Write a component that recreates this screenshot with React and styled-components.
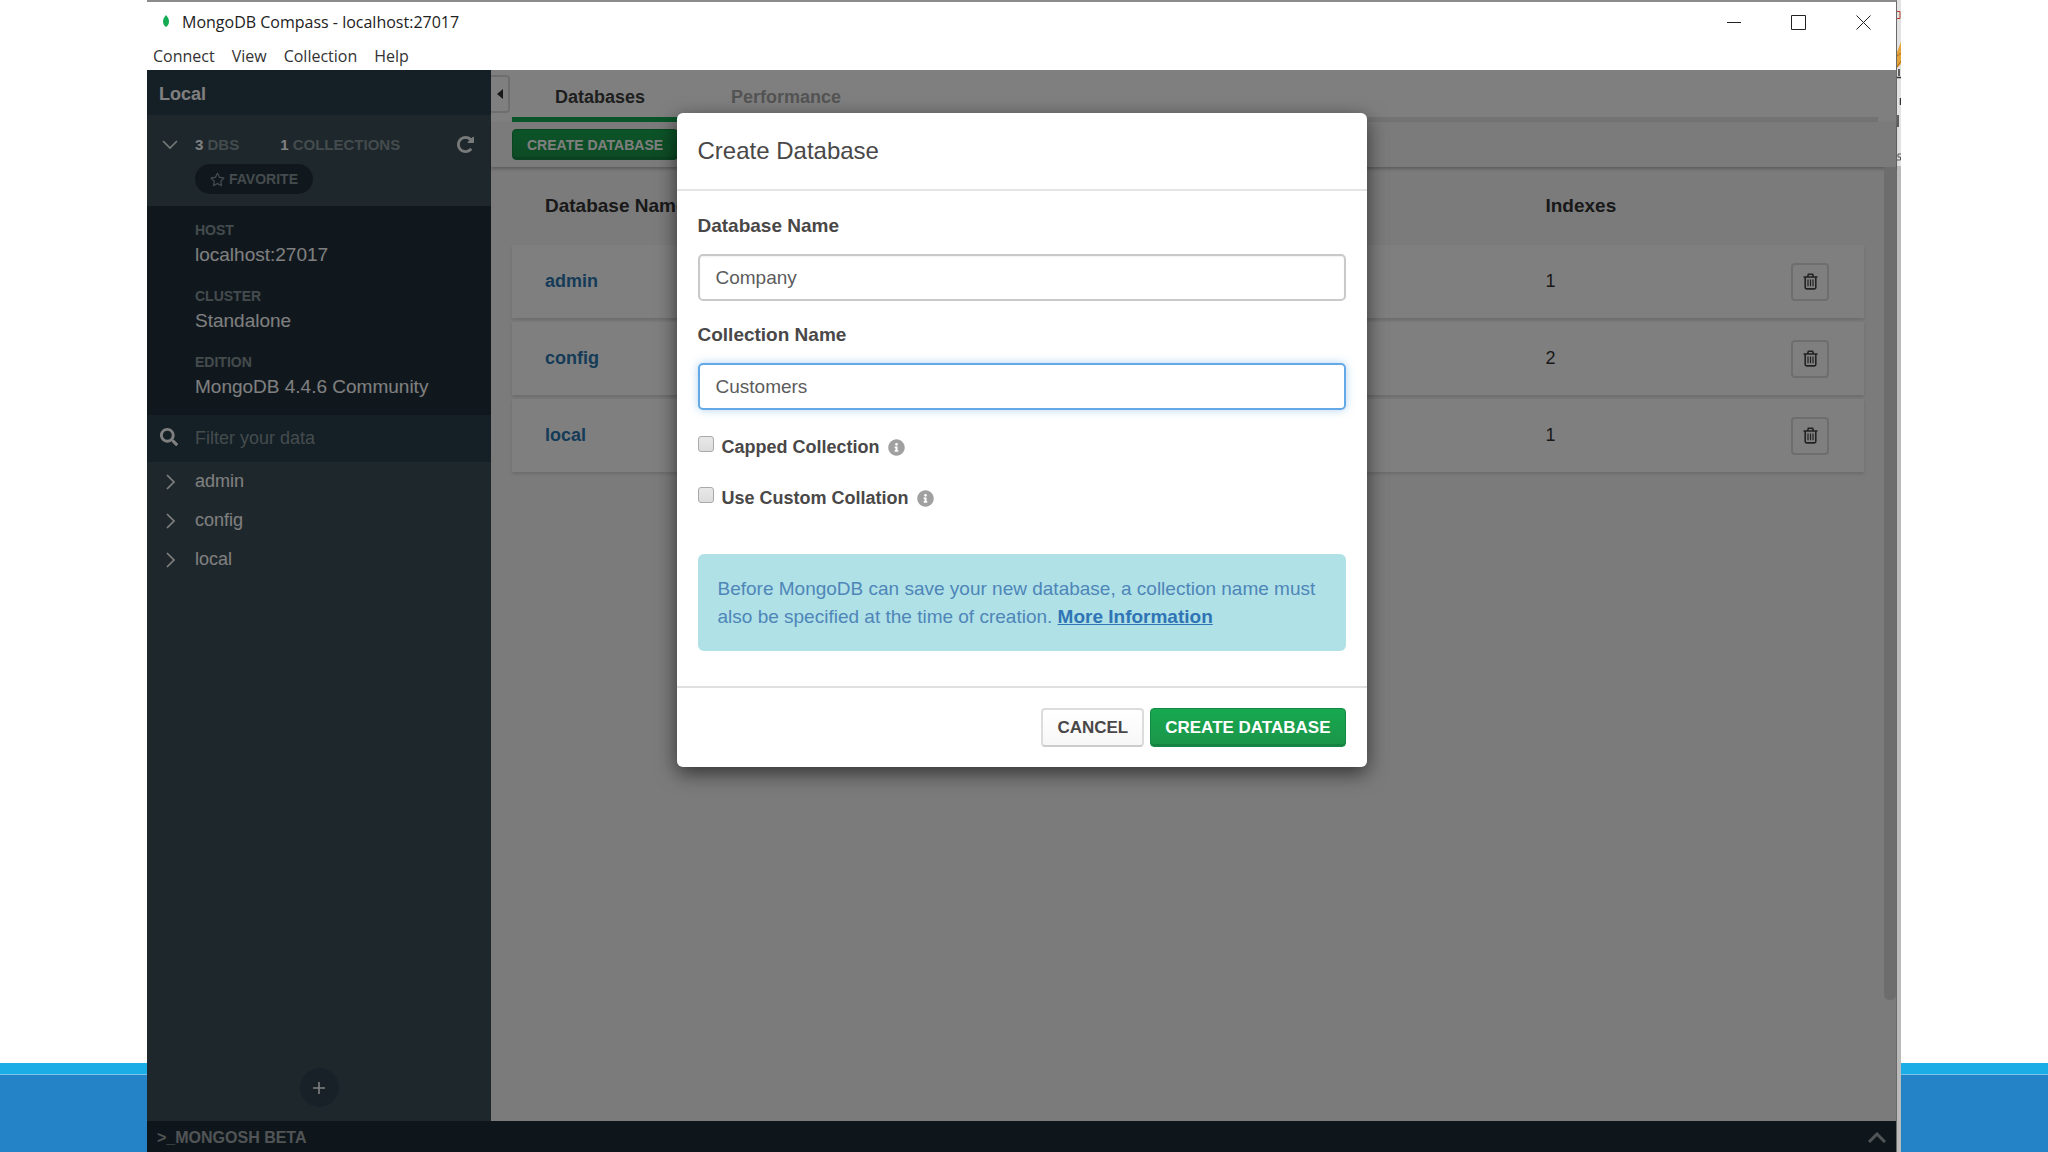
import React, { useState } from 'react'
import styled, { createGlobalStyle, css } from 'styled-components'
import { FaSearch, FaInfoCircle, FaRegStar } from 'react-icons/fa'

const databases = [
  { name: 'admin', indexes: 1 },
  { name: 'config', indexes: 2 },
  { name: 'local', indexes: 1 },
]

const details = [
  { label: 'Host', value: 'localhost:27017' },
  { label: 'Cluster', value: 'Standalone' },
  { label: 'Edition', value: 'MongoDB 4.4.6 Community' },
]

function Chevron({ direction }) {
  const points = direction === 'down' ? '1,5 8,12 15,5' : '5,1 12,8 5,15'
  return (
    <svg width="16" height="16" viewBox="0 0 16 16" fill="none" stroke="currentColor" strokeWidth="1.7" aria-hidden="true">
      <polyline points={points} />
    </svg>
  )
}

function RepeatIcon() {
  return (
    <svg width="17" height="17" viewBox="0 0 1536 1536" fill="currentColor" aria-hidden="true">
      <path d="M1536 128v448q0 26-19 45t-45 19h-448q-42 0-59-40-17-39 14-69l138-138q-148-137-349-137-104 0-198.500 40.500t-163.500 109.500-109.500 163.500-40.500 198.500 40.500 198.500 109.500 163.500 163.500 109.500 198.500 40.500q119 0 225-52t179-147q7-10 23-12 15 0 25 9l137 138q9 8 9.500 20.500t-7.500 22.500q-109 132-264 204.500t-327 72.500q-156 0-298-61t-245-164-164-245-61-298 61-298 164-245 245-164 298-61q147 0 284.500 55.500t244.500 156.500l130-129q29-31 70-14 39 17 39 59z" />
    </svg>
  )
}

function TrashIcon() {
  return (
    <svg width="15" height="17" viewBox="0 0 15 17" fill="none" stroke="currentColor" strokeWidth="1.6" aria-hidden="true">
      <path d="M0.5 4h14M4.5 4L5.4 1.2h4.2L10.5 4M2.2 4v10.6c0 .8.5 1.3 1.3 1.3h8c.8 0 1.3-.5 1.3-1.3V4" />
      <path d="M5 6.6v6.6M7.5 6.6v6.6M10 6.6v6.6" strokeWidth="1.2" />
    </svg>
  )
}

function TitleBar() {
  return (
    <Bar>
      <svg width="6" height="14" viewBox="0 0 6 14" aria-hidden="true">
        <path d="M3 0C1 2.4 0 4.4 0 6.6 0 9 1.2 10.8 3 12c1.800-1.200 3-3 3-5.400C6 4.400 5 2.400 3 0z" fill="#13aa52" />
      </svg>
      <WindowTitle>MongoDB Compass - localhost:27017</WindowTitle>
      <WindowButton aria-label="Minimize">
        <svg width="14" height="14" viewBox="0 0 14 14" stroke="#222" fill="none"><path d="M0 7.500h14" /></svg>
      </WindowButton>
      <WindowButton aria-label="Maximize">
        <svg width="15" height="15" viewBox="0 0 15 15" stroke="#222" fill="none"><path d="M.5.5h14v14H.5z" /></svg>
      </WindowButton>
      <WindowButton aria-label="Close">
        <svg width="15" height="15" viewBox="0 0 15 15" stroke="#222" fill="none"><path d="M.5.5l14 14M14.500.5l-14 14" /></svg>
      </WindowButton>
    </Bar>
  )
}

function Sidebar() {
  return (
    <Side>
      <SideTitle>Local</SideTitle>
      <Stats>
        <StatsRow>
          <Chevron direction="down" />
          <Stat><strong>3</strong> DBS</Stat>
          <Stat><strong>1</strong> COLLECTIONS</Stat>
          <Refresh aria-label="Refresh"><RepeatIcon /></Refresh>
        </StatsRow>
        <Favorite><FaRegStar size={15} /> FAVORITE</Favorite>
      </Stats>
      <Details>
        {details.map(({ label, value }) => (
          <div key={label}>
            <dt>{label}</dt>
            <dd>{value}</dd>
          </div>
        ))}
      </Details>
      <Filter>
        <FaSearch size={18} />
        <input type="text" placeholder="Filter your data" aria-label="Filter your data" />
      </Filter>
      <Tree>
        {databases.map(({ name }) => (
          <li key={name}>
            <Chevron />
            {name}
          </li>
        ))}
      </Tree>
      <AddButton aria-label="Create database">
        <svg width="12" height="12" viewBox="0 0 12 12" stroke="currentColor" strokeWidth="1.6"><path d="M6 0v12M0 6h12" /></svg>
      </AddButton>
    </Side>
  )
}

function DatabaseList() {
  return (
    <ListArea>
      <List>
        <Table>
          <thead>
            <tr>
              <th>Database Name</th>
              <th>Indexes</th>
              <th aria-label="Actions" />
            </tr>
          </thead>
          <tbody>
            {databases.map(({ name, indexes }) => (
              <tr key={name}>
                <td><a href={`#${name}`}>{name}</a></td>
                <td>{indexes}</td>
                <td><Trash aria-label={`Drop ${name}`}><TrashIcon /></Trash></td>
              </tr>
            ))}
          </tbody>
        </Table>
      </List>
      <ScrollTrack><ScrollThumb /></ScrollTrack>
    </ListArea>
  )
}

function CreateDatabase() {
  const [database, setDatabase] = useState('Company')
  const [collection, setCollection] = useState('Customers')

  return (
    <Backdrop>
      <Modal role="dialog" aria-labelledby="modal-title">
        <ModalTitle id="modal-title">Create Database</ModalTitle>
        <ModalBody>
          <Label htmlFor="database">Database Name</Label>
          <TextInput id="database" value={database} onChange={(e) => setDatabase(e.target.value)} />
          <Label htmlFor="collection">Collection Name</Label>
          <TextInput id="collection" $active value={collection} onChange={(e) => setCollection(e.target.value)} />
          <Option>
            <input type="checkbox" />
            <span>Capped Collection</span>
            <FaInfoCircle size={17} />
          </Option>
          <Option>
            <input type="checkbox" />
            <span>Use Custom Collation</span>
            <FaInfoCircle size={17} />
          </Option>
          <Notice>
            Before MongoDB can save your new database, a collection name must also be specified at the time of creation.{' '}
            <a href="#more">More Information</a>
          </Notice>
        </ModalBody>
        <ModalFooter>
          <Button>CANCEL</Button>
          <Button $primary>CREATE DATABASE</Button>
        </ModalFooter>
      </Modal>
    </Backdrop>
  )
}

function App() {
  return (
    <Slide>
      <GlobalStyle />
      <SlideEdge />
      <Window>
        <TitleBar />
        <Menu>
          <button>Connect</button>
          <button>View</button>
          <button>Collection</button>
          <button>Help</button>
        </Menu>
        <Workspace>
          <Columns>
            <Sidebar />
            <Content>
              <TabsHeader>
                <Collapse aria-label="Collapse sidebar">
                  <svg width="6" height="10" viewBox="0 0 6 10" fill="currentColor"><path d="M6 0v10L0 5z" /></svg>
                </Collapse>
                <Tabs>
                  <Tab $active>Databases</Tab>
                  <Tab>Performance</Tab>
                </Tabs>
              </TabsHeader>
              <Toolbar>
                <Button $primary $small>CREATE DATABASE</Button>
              </Toolbar>
              <DatabaseList />
            </Content>
          </Columns>
          <Shell>
            <span>&gt;_MONGOSH BETA</span>
            <svg width="18" height="11" viewBox="0 0 18 11" fill="none" stroke="currentColor" strokeWidth="3"><path d="M1 10l8-8 8 8" /></svg>
          </Shell>
          <CreateDatabase />
        </Workspace>
      </Window>
      <Behind>
        <svg width="4" height="166" viewBox="0 0 4 166">
          <path d="M0 11.500h3v7H0" fill="none" stroke="#b5402a" />
          <path d="M4 42v22l-4 4V52z" fill="#e5a43a" />
          <path d="M0 56l4-3M0 67l4-6" stroke="#a8691c" />
          <path d="M2 69v7M0 77.500h4M3.500 98v7M1 115v12" stroke="#333" strokeWidth="1.500" />
          <path d="M4 154H1v3h2.500v3H0" fill="none" stroke="#555" />
        </svg>
      </Behind>
      <SlideEdge />
    </Slide>
  )
}

export default App

const GlobalStyle = createGlobalStyle`
  * {
    box-sizing: border-box;
  }

  body {
    margin: 0;
    background: #fff;
    font-family: 'Liberation Sans', Arial, sans-serif;
    font-size: 18px;
  }

  button, input {
    font: inherit;
    color: inherit;
    margin: 0;
  }

  button {
    padding: 0;
    border: 0;
    background: none;
  }
`

const Slide = styled.div`
  display: grid;
  grid-template-columns: 147px 1fr 4px 147px;
  min-height: 100vh;
`

const SlideEdge = styled.div`
  display: flex;
  flex-direction: column;
  justify-content: flex-end;

  &::before {
    content: '';
    height: 11px;
    background: #1aade6;
  }

  &::after {
    content: '';
    height: 77px;
    border-top: 1px solid #7cc0ec;
    background: #2482c6;
  }
`

const Window = styled.div`
  display: flex;
  flex-direction: column;
  border-top: 2px solid #8c8c8c;
  border-right: 1px solid #6a6a6a;
  background: #fff;
`

const Behind = styled.div`
  background: linear-gradient(#e2e2e2 166px, #bababa 166px);

  svg {
    display: block;
  }
`

const Bar = styled.header`
  display: flex;
  align-items: center;
  height: 40px;
  padding-left: 16px;
`

const WindowTitle = styled.span`
  flex: 1;
  margin-left: 13px;
  font: 16px 'Open Sans', sans-serif;
  color: #222;
`

const WindowButton = styled.button`
  display: flex;
  align-items: center;
  justify-content: center;
  width: 65px;
  height: 38px;
`

const Menu = styled.nav`
  display: flex;
  align-items: center;
  gap: 17px;
  height: 28px;
  padding-left: 6px;
  font: 16px 'Open Sans', sans-serif;
  color: #333;
`

const Workspace = styled.div`
  position: relative;
  flex: 1;
  display: flex;
  flex-direction: column;
`

const Columns = styled.div`
  flex: 1;
  display: flex;
`

const Side = styled.aside`
  display: flex;
  flex-direction: column;
  width: 344px;
  padding-bottom: 14px;
  background: #3d4f58;
  color: #fff;
`

const SideTitle = styled.div`
  height: 45px;
  padding: 0 12px;
  background: #2b404d;
  font-weight: bold;
  line-height: 48px;
`

const Stats = styled.div`
  height: 91px;
  padding: 14px 15px;
  font-size: 15px;
  font-weight: bold;
  color: #89979b;
`

const StatsRow = styled.div`
  display: flex;
  align-items: center;
  height: 30px;
  margin-bottom: 5px;

  > svg {
    margin-right: 17px;
    color: #e7eeec;
  }
`

const Stat = styled.span`
  margin-right: 41px;

  strong {
    color: #fff;
  }
`

const Refresh = styled.button`
  display: flex;
  margin-left: auto;
  margin-right: 2px;
  color: #f0f4f3;
`

const Favorite = styled.button`
  display: flex;
  align-items: center;
  gap: 4px;
  height: 30px;
  margin-left: 33px;
  padding: 0 15px;
  border-radius: 15px;
  background: #21313c;
  font-size: 14px;
`

const Details = styled.dl`
  display: flex;
  flex-direction: column;
  gap: 16px;
  margin: 0;
  padding: 14px 48px 13px;
  background: #21313c;

  dt {
    font-size: 14px;
    font-weight: bold;
    line-height: 20px;
    text-transform: uppercase;
    color: #89979b;
  }

  dd {
    margin: 0;
    font-size: 19px;
    line-height: 30px;
  }
`

const Filter = styled.label`
  display: flex;
  align-items: center;
  gap: 17px;
  height: 47px;
  padding: 0 13px;
  background: #2b404d;

  svg {
    margin-bottom: 4px;
  }

  input {
    flex: 1;
    min-width: 0;
    padding: 0;
    border: 0;
    background: none;
    outline: none;
  }

  input::placeholder {
    color: #89979b;
    opacity: 1;
  }
`

const Tree = styled.ul`
  flex: 1;
  margin: 0;
  padding: 0;
  list-style: none;

  li {
    display: flex;
    align-items: center;
    gap: 17px;
    height: 39px;
    padding: 0 15px;
  }
`

const AddButton = styled.button`
  display: flex;
  align-items: center;
  justify-content: center;
  align-self: center;
  width: 39px;
  height: 39px;
  border-radius: 50%;
  background: #2f434f;
`

const Content = styled.main`
  flex: 1;
  display: flex;
  flex-direction: column;
  background: #f6f6f6;
`

const TabsHeader = styled.div`
  display: flex;
  align-items: flex-start;
  padding-right: 18px;
  background: #fff;
`

const Collapse = styled.button`
  display: flex;
  align-items: center;
  justify-content: center;
  width: 19px;
  height: 38px;
  margin: 5px 2px 0 0;
  border: 2px solid #dcdcdc;
  border-left: 0;
  border-radius: 0 4px 4px 0;
  color: #333;
`

const Tabs = styled.div`
  flex: 1;
  display: flex;
  border-bottom: 5px solid #e6e6e6;
`

const Tab = styled.button`
  height: 52px;
  margin-bottom: -5px;
  padding: 7px 43px 0;
  border-bottom: 5px solid ${(props) => (props.$active ? '#13aa52' : 'transparent')};
  font-weight: bold;
  color: ${(props) => (props.$active ? '#3d3d3d' : '#a8a8a8')};
`

const Toolbar = styled.div`
  display: flex;
  align-items: center;
  height: 45px;
  padding: 0 21px;
  box-shadow: 0 2px 3px rgba(0, 0, 0, 0.25);
`

const Button = styled.button`
  height: 39px;
  padding: 0 14px;
  border: 2px solid #dcdcdc;
  border-bottom-color: #ccc;
  border-radius: 4px;
  background: linear-gradient(#fff, #f7f7f7);
  font-size: 17px;
  font-weight: bold;
  color: #494747;

  ${(props) => props.$primary && css`
    border: 1px solid #128a43;
    background: linear-gradient(#17a850, #1c9549);
    box-shadow: inset 0 -2px 0 #168343;
    color: #fff;
  `}

  ${(props) => props.$small && css`
    height: 31px;
    font-size: 14px;
  `}
`

const ListArea = styled.div`
  flex: 1;
  display: flex;
`

const List = styled.div`
  flex: 1;
  padding: 0 20px 0 21px;
`

const Table = styled.table`
  width: 100%;
  border-spacing: 0 4px;
  color: #333;

  th {
    height: 70px;
    font-size: 19px;
    color: #333;
  }

  th, td {
    padding: 0 0 0 33px;
    text-align: left;
  }

  th:first-child {
    width: 74%;
  }

  td {
    height: 73px;
    background: #fff;
  }

  tbody tr {
    box-shadow: 0 2px 3px rgba(0, 0, 0, 0.12);
  }

  td:last-child {
    padding-right: 35px;
  }

  a {
    font-weight: bold;
    text-decoration: none;
    color: #2a77b0;
  }
`

const Trash = styled.button`
  display: flex;
  align-items: center;
  justify-content: center;
  width: 38px;
  height: 38px;
  margin-left: auto;
  border: 2px solid #dcdcdc;
  border-radius: 4px;
  color: #444;
`

const ScrollTrack = styled.div`
  display: flex;
  width: 12px;
  padding-bottom: 121px;
`

const ScrollThumb = styled.div`
  flex: 1;
  border-radius: 0 0 5px 5px;
  background: #dadada;
`

const Shell = styled.footer`
  display: flex;
  align-items: center;
  justify-content: space-between;
  height: 31px;
  padding: 2px 10px 0;
  background: #1e2d37;
  font-size: 16px;
  font-weight: bold;
  color: #a3a9ac;
`

// covers everything below the menu bar
const Backdrop = styled.div`
  position: absolute;
  inset: 0;
  padding-top: 43px;
  background: rgba(0, 0, 0, 0.5);
`

const Modal = styled.section`
  max-width: 690px;
  margin: 0 auto;
  border-radius: 6px;
  background: #fff;
  box-shadow: 0 6px 20px rgba(0, 0, 0, 0.6);
  color: #494747;
`

const ModalTitle = styled.h2`
  margin: 0;
  padding: 0 21px;
  border-bottom: 2px solid #e5e5e5;
  font-size: 24px;
  font-weight: normal;
  line-height: 76px;
`

const ModalBody = styled.div`
  padding: 20px 21px 35px;
  font-size: 19px;
`

const Label = styled.label`
  display: block;
  margin-bottom: 13px;
  font-weight: bold;
  line-height: 30px;
`

const TextInput = styled.input`
  display: block;
  width: 100%;
  height: 47px;
  margin-bottom: 19px;
  padding: 0 16px;
  border: 2px solid ${(props) => (props.$active ? '#64a9e6' : '#c9c9c9')};
  border-radius: 5px;
  outline: none;
  box-shadow: ${(props) => (props.$active ? '0 0 8px rgba(100, 170, 230, 0.5)' : 'inset 0 1px 2px rgba(0, 0, 0, 0.06)')};
  color: #5c5c5c;
`

const Option = styled.label`
  display: flex;
  align-items: center;
  gap: 8px;
  height: 36px;
  margin-bottom: 15px;
  font-size: 18px;
  font-weight: bold;

  input {
    appearance: none;
    width: 16px;
    height: 16px;
    margin-bottom: 6px;
    border: 1px solid #a9a9a9;
    border-radius: 3px;
    background: linear-gradient(#e8e8e8, #dcdcdc);
  }

  svg {
    color: #a0a0a0;
  }
`

const Notice = styled.p`
  margin: 38px 0 0;
  padding: 21px 20px 20px;
  border-radius: 6px;
  background: #b0e1e7;
  line-height: 28px;
  color: #4e86b8;

  a {
    font-weight: bold;
    color: #2f74b5;
  }
`

const ModalFooter = styled.footer`
  display: flex;
  justify-content: flex-end;
  gap: 6px;
  padding: 20px 21px;
  border-top: 2px solid #e0e0e0;
`
